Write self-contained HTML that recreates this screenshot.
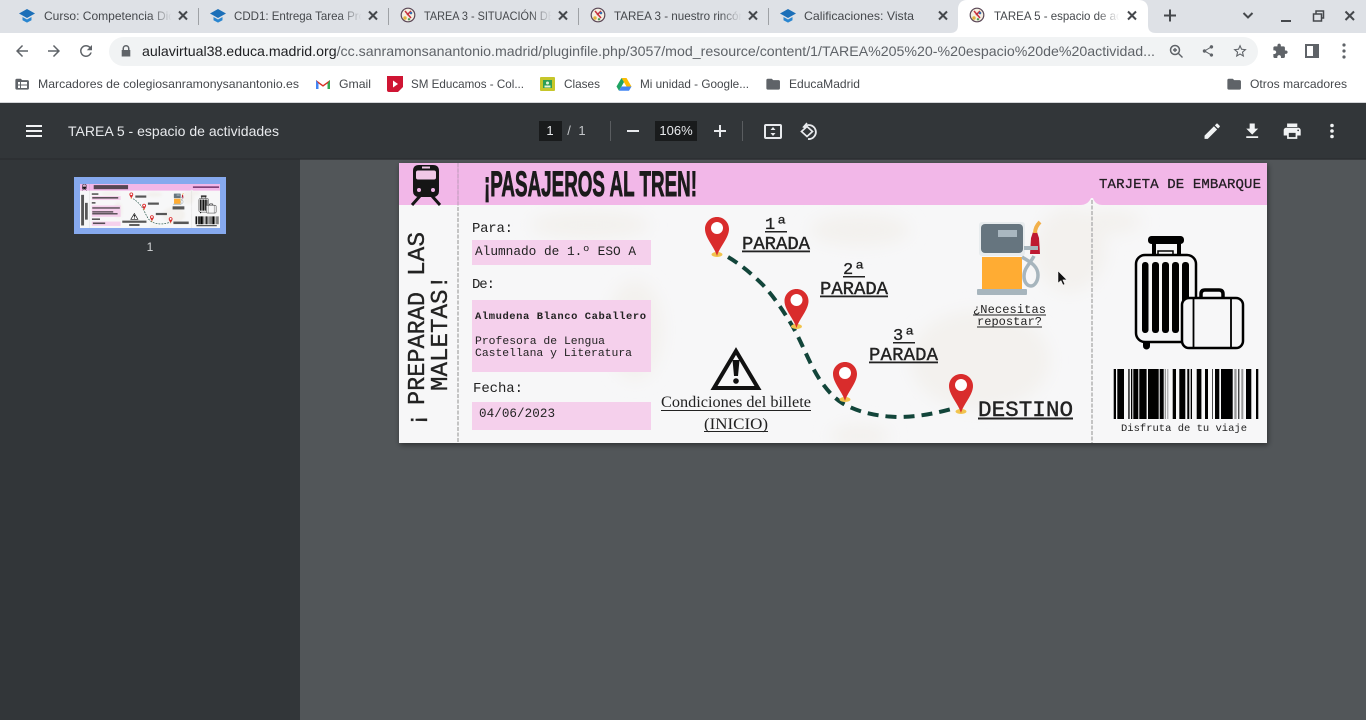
<!DOCTYPE html>
<html lang="es"><head><meta charset="utf-8"><title>TAREA 5 - espacio de actividades</title>
<style>
html,body{margin:0;padding:0;width:1366px;height:720px;overflow:hidden;background:#525659}
svg{display:block;position:absolute;left:0;top:0}
text{font-family:"Liberation Sans",sans-serif}
.t{font-size:12px;fill:#45484c}
.b{font-size:12px;fill:#45484c}
.m{font-family:"Liberation Mono",monospace;fill:#222}
.w{fill:#e8eaed}
.x{stroke:#45484c;stroke-width:2;fill:none}
</style></head><body>
<svg width="1366" height="720" viewBox="0 0 1366 720" xmlns="http://www.w3.org/2000/svg">
<defs>
<linearGradient id="fd"><stop offset="0" stop-color="#dee1e6" stop-opacity="0"/><stop offset=".8" stop-color="#dee1e6"/></linearGradient>
<linearGradient id="fw"><stop offset="0" stop-color="#fff" stop-opacity="0"/><stop offset=".8" stop-color="#fff"/></linearGradient>
<filter id="bl" x="-30%" y="-30%" width="160%" height="160%"><feGaussianBlur stdDeviation="8"/></filter>
<filter id="sh" x="-3%" y="-5%" width="106%" height="112%"><feDropShadow dx="1" dy="2" stdDeviation="3" flood-color="#000" flood-opacity=".45"/></filter>
<clipPath id="tk"><rect x="399" y="163" width="868" height="280"/></clipPath>
<g id="cap"><path d="M-8-1.500 0-6l8 4.500L0 3z" fill="#1c6fb8"/><path d="M-4.500 2 0 4.500 4.500 2v3.200L0 7.600-4.500 5.200z" fill="#2a86d0"/></g>
<g id="ring"><circle r="6.800" fill="#f5efe2" stroke="#5a4756" stroke-width="1.200"/><path d="M-3-4 3 3M3-4-1 0" stroke="#c7303c" stroke-width="1.500" fill="none"/><circle cx="-3" cy="3" r="1.700" fill="#e2b23c"/><circle cx="3" cy="-2" r="1.300" fill="#3a6fb0"/><circle cx="1" cy="4.300" r="1.200" fill="#4d9a5a"/></g>
<path id="pinshape" d="M12 0C5.400 0 0 5.300 0 12c0 9 9.500 18 12 27 2.500-9 12-18 12-27C24 5.300 18.600 0 12 0z" fill="#d92c2c"/>
<g id="pin"><ellipse cx="12" cy="37.500" rx="5.500" ry="2.500" fill="#f1c44e"/><use href="#pinshape"/><circle cx="12" cy="11" r="6" fill="#fff"/></g>

<g id="art">
<rect x="399" y="163" width="868" height="280" fill="#f7f7f8"/>
<g clip-path="url(#tk)"><g fill="#f3f1ee" filter="url(#bl)">
<ellipse cx="590" cy="225" rx="60" ry="14"/><ellipse cx="635" cy="330" rx="28" ry="50"/><ellipse cx="860" cy="230" rx="50" ry="16"/>
<ellipse cx="980" cy="360" rx="70" ry="50"/><ellipse cx="1070" cy="250" rx="36" ry="42"/><ellipse cx="1110" cy="222" rx="32" ry="12"/><ellipse cx="860" cy="436" rx="30" ry="12"/>
</g></g>
<path d="M399 163h868v42h-164q-8 0-10-7h-2q-3 7-11 7H399z" fill="#f2b7e8"/>
<path d="M458 163v280M1092 200v243" stroke="#b3b3b3" stroke-width="1.500" stroke-dasharray="4 1.500"/>
<path d="M458 163v42" stroke="#d99cd0" stroke-width="1"/>
<path d="M419 165h14q6 0 6 6v20q0 5-5 6h-16q-5-1-5-6v-20q0-6 6-6z" fill="#151515"/>
<rect x="416" y="170.500" width="20" height="9" rx="2" fill="#f0c8e6"/><rect x="422" y="166.500" width="8" height="2" fill="#f0c8e6"/>
<circle cx="419" cy="190" r="2" fill="#f2b7e8"/><circle cx="433" cy="190" r="2" fill="#f2b7e8"/>
<path d="M420 196l-8 9M432 196l8 9" stroke="#151515" stroke-width="3"/>
<rect x="472" y="240" width="179" height="25" fill="#f5d0ec"/>
<rect x="472" y="300" width="179" height="72" fill="#f5d0ec"/>
<rect x="472" y="402" width="179" height="28" fill="#f5d0ec"/>
<path d="M736 351l22 37h-44z" fill="none" stroke="#111" stroke-width="4"/>
<path d="M732.500 360h7l-1.500 16h-4z" fill="#111"/><circle cx="736" cy="381" r="2.800" fill="#111"/>
<path d="M728 257C740 264 752 274 763 285c12 13 21 27 30 42 10 18 16 36 27 53 7 10 13 17 22 23 14 8 30 13 55 14 22 0 40-4 58-9" fill="none" stroke="#12453a" stroke-width="4" stroke-dasharray="11 7"/>
<use href="#pin" x="705" y="217"/>
<use href="#pin" x="784.500" y="289"/>
<use href="#pin" x="833" y="362"/>
<use href="#pin" x="949" y="374"/>
<rect x="979" y="222" width="46" height="34" rx="3" fill="#e8ecee"/>
<rect x="981" y="224" width="42" height="29" rx="4" fill="#66757f"/>
<rect x="998" y="230" width="19" height="7" fill="#a9b7c0"/>
<rect x="982" y="257" width="40" height="33" fill="#ffac33"/>
<rect x="977" y="289" width="50" height="6" rx="1" fill="#a7b5bd"/>
<path d="M1022 257c6 4 16 8 16 18 0 7-4 11-7 11-4 0-7-4-7-10 0-8 6-12 10-20" fill="none" stroke="#a7b5bd" stroke-width="3.500"/>
<path d="M1031 238l2-6h4l2 6 1 16h-10z" fill="#be1931"/>
<rect x="1024" y="246" width="14" height="4" fill="#a7b5bd"/>
<path d="M1035 233c0-5 2-8 5-11" fill="none" stroke="#f2b04a" stroke-width="4"/>
<rect x="1148" y="236" width="36" height="8" rx="3.500" fill="#000"/>
<rect x="1152" y="244" width="4" height="11" fill="#000"/><rect x="1177" y="244" width="4" height="11" fill="#000"/>
<path d="M1158 254v-3h15v3" fill="none" stroke="#000" stroke-width="1.500"/>
<rect x="1136" y="255" width="60" height="87" rx="9" fill="#f7f7f8" stroke="#000" stroke-width="2.500"/>
<g fill="#000"><rect x="1142" y="262" width="6.500" height="71" rx="3"/><rect x="1152" y="262" width="7" height="71" rx="3"/><rect x="1162" y="262" width="7" height="71" rx="3"/><rect x="1172" y="262" width="7" height="71" rx="3"/><rect x="1182" y="262" width="7" height="71" rx="3"/>
<path d="M1143 342h7v4a3.500 3.500 0 0 1-7 0z"/></g>
<path d="M1201 298v-4q0-4 4-4h14q4 0 4 4v4" fill="none" stroke="#000" stroke-width="3.500"/>
<rect x="1182" y="298" width="61" height="50" rx="7" fill="#f7f7f8" stroke="#000" stroke-width="2.500"/>
<path d="M1193.500 298v50M1231 298v50" stroke="#000" stroke-width="1.800"/>
<g fill="#000">
<rect x="1113.700" y="369" width="2.300" height="50"/><rect x="1117.300" y="369" width="6.700" height="50"/><rect x="1128.300" y="369" width="1.300" height="50"/><rect x="1131" y="369" width="1.300" height="50"/><rect x="1133.300" y="369" width="5" height="50"/><rect x="1139.300" y="369" width="7.300" height="50"/><rect x="1148" y="369" width="10.700" height="50"/><rect x="1159.700" y="369" width="4" height="50"/><rect x="1172.700" y="369" width="3.300" height="50"/><rect x="1179.300" y="369" width="6" height="50"/><rect x="1187.300" y="369" width="2" height="50"/><rect x="1190.700" y="369" width="1.300" height="50"/><rect x="1196.700" y="369" width="4.700" height="50"/><rect x="1205" y="369" width="3" height="50"/><rect x="1212" y="369" width=".7" height="50"/><rect x="1215" y="369" width="4.300" height="50"/><rect x="1221" y="369" width="11.700" height="50"/><rect x="1238.300" y="369" width="1" height="50"/><rect x="1246" y="369" width="5.300" height="50"/><rect x="1256" y="369" width="2.300" height="50"/>
</g>
<g fill="#999"><rect x="1164.700" y="369" width="1.300" height="50"/><rect x="1167.300" y="369" width="1" height="50"/><rect x="1234.300" y="369" width="2.300" height="50"/><rect x="1241.300" y="369" width="2" height="50"/></g>
</g>
</defs>

<!-- chrome -->
<rect width="1366" height="33" fill="#dee1e6"/>
<rect y="33" width="1366" height="69" fill="#fff"/>
<rect y="102" width="1366" height="1" fill="#d3d5d8"/>
<path d="M950 33c6 0 8-3 8-8V9c0-5 3-9 9-9h172c6 0 9 4 9 9v16c0 5 2 8 8 8z" fill="#fff"/>
<g stroke="#9ea1a5" stroke-width="1"><path d="M198.500 8v17M388.500 8v17M578.500 8v17M768.500 8v17"/></g>

<use href="#cap" x="27" y="15"/>
<text class="t" x="44" y="20" textLength="131" lengthAdjust="spacingAndGlyphs">Curso: Competencia Did</text><rect x="150" y="6" width="27" height="20" fill="url(#fd)"/>
<path class="x" d="M179 11.500l8 8M187 11.500l-8 8"/>
<use href="#cap" x="218" y="15"/>
<text class="t" x="234" y="20" textLength="131" lengthAdjust="spacingAndGlyphs">CDD1: Entrega Tarea Pro</text><rect x="340" y="6" width="27" height="20" fill="url(#fd)"/>
<path class="x" d="M369 11.500l8 8M377 11.500l-8 8"/>
<use href="#ring" x="408" y="15"/>
<text class="t" x="424" y="20" textLength="131" lengthAdjust="spacingAndGlyphs">TAREA 3 - SITUACIÓN DE</text><rect x="530" y="6" width="27" height="20" fill="url(#fd)"/>
<path class="x" d="M559 11.500l8 8M567 11.500l-8 8"/>
<use href="#ring" x="598" y="15"/>
<text class="t" x="614" y="20" textLength="131" lengthAdjust="spacingAndGlyphs">TAREA 3 - nuestro rincón</text><rect x="720" y="6" width="27" height="20" fill="url(#fd)"/>
<path class="x" d="M749 11.500l8 8M757 11.500l-8 8"/>
<use href="#cap" x="788" y="15"/>
<text class="t" x="804" y="20" textLength="110" lengthAdjust="spacingAndGlyphs">Calificaciones: Vista</text>
<path class="x" d="M939 11.500l8 8M947 11.500l-8 8"/>
<use href="#ring" x="977" y="15"/>
<text class="t" x="994" y="20" textLength="131" lengthAdjust="spacingAndGlyphs">TAREA 5 - espacio de act</text><rect x="1097" y="6" width="28" height="20" fill="url(#fw)"/>
<path class="x" d="M1128 11.500l8 8M1136 11.500l-8 8"/>
<path d="M1170 9.500v12M1164 15.500h12" stroke="#45484c" stroke-width="2" fill="none"/>
<path d="M1243.500 13l4.500 4.500 4.500-4.500" stroke="#45484c" stroke-width="2" fill="none"/>
<path d="M1281 21h10" stroke="#45484c" stroke-width="2"/>
<path d="M1313.500 14h8v7h-8zM1316 14v-3h7.500v7H1322" stroke="#45484c" stroke-width="1.500" fill="none"/>
<path class="x" d="M1345.500 11.500l8.500 8.500M1354 11.500l-8.500 8.500"/>

<!-- nav row -->
<g fill="#5f6368">
<path transform="translate(13 42) scale(.75)" d="M20 11H7.830l5.590-5.590L12 4l-8 8 8 8 1.410-1.410L7.830 13H20v-2z"/>
<path transform="translate(63 42) scale(-.75 .75)" d="M20 11H7.830l5.590-5.590L12 4l-8 8 8 8 1.410-1.410L7.830 13H20v-2z"/>
<path transform="translate(77 42) scale(.75)" d="M17.650 6.350A7.950 7.950 0 0 0 12 4a8 8 0 1 0 7.750 10h-2.080A6 6 0 1 1 12 6c1.660 0 3.140.690 4.220 1.780L13 11h7V4l-2.350 2.350z"/>
</g>
<rect x="109" y="37" width="1149" height="29" rx="14.500" fill="#f1f3f4"/>
<path d="M122.500 50v-1.500a3.500 3.500 0 0 1 7 0V50h.800v6.500h-8.600V50zm1.500 0h4v-1.500a2 2 0 0 0-4 0z" fill="#5f6368"/>
<text x="142" y="56" font-size="14" textLength="1013" lengthAdjust="spacingAndGlyphs"><tspan fill="#202124">aulavirtual38.educa.madrid.org</tspan><tspan fill="#5f6368">/cc.sanramonsanantonio.madrid/pluginfile.php/3057/mod_resource/content/1/TAREA%205%20-%20espacio%20de%20actividad...</tspan></text>
<circle cx="1175" cy="50" r="4.500" fill="none" stroke="#5f6368" stroke-width="1.500"/><path d="M1178.500 53.500l4 4M1173 50h4M1175 48v4" stroke="#5f6368" stroke-width="1.400"/>
<path transform="translate(1201 44) scale(.58)" fill="#5f6368" d="M18 16.080c-.760 0-1.440.300-1.960.770L8.910 12.700c.050-.230.090-.460.090-.700s-.040-.470-.090-.700l7.050-4.110c.540.500 1.250.810 2.040.810 1.660 0 3-1.340 3-3s-1.340-3-3-3-3 1.340-3 3c0 .240.040.470.090.700L8.040 9.810C7.500 9.310 6.790 9 6 9c-1.660 0-3 1.340-3 3s1.340 3 3 3c.790 0 1.500-.310 2.040-.810l7.120 4.160c-.050.210-.080.430-.080.650 0 1.610 1.310 2.920 2.920 2.920s2.920-1.310 2.920-2.920-1.310-2.920-2.920-2.920z"/>
<path transform="translate(1232 43) scale(.67)" fill="#5f6368" d="M22 9.240l-7.190-.620L12 2 9.190 8.630 2 9.240l5.460 4.730L5.820 21 12 17.270 18.180 21l-1.630-7.030L22 9.240zM12 15.400l-3.760 2.270 1-4.280-3.320-2.880 4.380-.380L12 6.100l1.710 4.040 4.380.380-3.320 2.880 1 4.280L12 15.400z"/>
<path transform="translate(1272 43) scale(.68)" fill="#5f6368" d="M20.500 11H19V7c0-1.100-.900-2-2-2h-4V3.500C13 2.120 11.880 1 10.500 1S8 2.120 8 3.500V5H4c-1.100 0-1.990.900-1.990 2v3.800H3.500c1.490 0 2.700 1.210 2.700 2.700s-1.210 2.700-2.700 2.700H2V20c0 1.100.900 2 2 2h3.800v-1.500c0-1.490 1.210-2.700 2.700-2.700 1.490 0 2.700 1.210 2.700 2.700V22H17c1.100 0 2-.900 2-2v-4h1.500c1.380 0 2.500-1.120 2.500-2.500S21.880 11 20.500 11z"/>
<rect x="1306" y="45" width="12" height="12" fill="none" stroke="#5f6368" stroke-width="2"/><rect x="1313" y="45" width="5" height="12" fill="#5f6368"/>
<g fill="#5f6368"><circle cx="1344" cy="45" r="1.600"/><circle cx="1344" cy="51" r="1.600"/><circle cx="1344" cy="57" r="1.600"/></g>

<!-- bookmarks -->
<g fill="#5f6368">
<path transform="translate(14 76) scale(.68)" d="M10 4H4c-1.100 0-1.990.900-1.990 2L2 18c0 1.100.900 2 2 2h16c1.100 0 2-.900 2-2V8c0-1.100-.900-2-2-2h-8l-2-2z"/>
<path transform="translate(765 76) scale(.68)" d="M10 4H4c-1.100 0-1.990.900-1.990 2L2 18c0 1.100.900 2 2 2h16c1.100 0 2-.900 2-2V8c0-1.100-.900-2-2-2h-8l-2-2z"/>
<path transform="translate(1226 76) scale(.68)" d="M10 4H4c-1.100 0-1.990.900-1.990 2L2 18c0 1.100.900 2 2 2h16c1.100 0 2-.900 2-2V8c0-1.100-.900-2-2-2h-8l-2-2z"/>
</g>
<rect x="18" y="82" width="9" height="6" fill="#fff"/><path d="M20.500 82v6M18 85h9" stroke="#5f6368"/>
<text class="b" x="38" y="88" textLength="261" lengthAdjust="spacingAndGlyphs">Marcadores de colegiosanramonysanantonio.es</text>
<path d="M316 89v-9l7 5 7-5v9h-2.500v-5.500l-4.500 3.300-4.500-3.300V89z" fill="#d93025"/><path d="M316 80l0 9h2.500v-5.500z" fill="#4285f4"/><path d="M330 80v9h-2.500v-5.500z" fill="#34a853"/>
<text class="b" x="339" y="88" textLength="32" lengthAdjust="spacingAndGlyphs">Gmail</text>
<path d="M387 76h16v11l-5 5h-9a2 2 0 0 1-2-2z" fill="#cf1533"/><path d="M393 80.500l5 3.500-5 3.500z" fill="#fff"/>
<text class="b" x="411" y="88" textLength="113" lengthAdjust="spacingAndGlyphs">SM Educamos - Col...</text>
<rect x="540" y="77" width="15" height="14" rx="1" fill="#c6c62a"/><rect x="543" y="80" width="9" height="8" fill="#2e9e55"/><circle cx="547.500" cy="83" r="1.500" fill="#e8f3d8"/><rect x="544.500" y="85.500" width="6" height="2" fill="#e8f3d8"/>
<text class="b" x="564" y="88" textLength="36" lengthAdjust="spacingAndGlyphs">Clases</text>
<path d="M621.500 78h5l5 8.500h-5z" fill="#fbbc04"/><path d="M621.500 78l-5 8.500 2.500 4.200 5-8.600z" fill="#1fa463"/><path d="M619 90.700h10l2.500-4.200h-10z" fill="#4285f4"/>
<text class="b" x="640" y="88" textLength="109" lengthAdjust="spacingAndGlyphs">Mi unidad - Google...</text>
<text class="b" x="789" y="88" textLength="71" lengthAdjust="spacingAndGlyphs">EducaMadrid</text>
<text class="b" x="1250" y="88" textLength="97" lengthAdjust="spacingAndGlyphs">Otros marcadores</text>

<!-- pdf viewer -->
<rect y="103" width="1366" height="617" fill="#525659"/>
<rect y="159" width="300" height="561" fill="#323639"/>
<rect y="103" width="1366" height="56" fill="#323639"/>
<rect y="158" width="1366" height="2" fill="#2b2e30" opacity=".7"/>
<path d="M26 125h16v2H26zM26 130h16v2H26zM26 135h16v2H26z" fill="#f1f3f4"/>
<text x="68" y="136" font-size="14" class="w" textLength="211" lengthAdjust="spacingAndGlyphs">TAREA 5 - espacio de actividades</text>
<rect x="539" y="121" width="23" height="20" fill="#191b1c"/>
<text x="550" y="135" font-size="13" text-anchor="middle" class="w">1</text>
<text x="569" y="135" font-size="13" text-anchor="middle" fill="#c4c7ca">/</text>
<text x="582" y="135" font-size="13" text-anchor="middle" fill="#c4c7ca">1</text>
<rect x="610" y="121" width="1" height="20" fill="#5a5d60"/>
<rect x="627" y="130" width="12" height="2" fill="#e8eaed"/>
<rect x="655" y="121" width="42" height="20" fill="#191b1c"/>
<text x="676" y="135" font-size="13" text-anchor="middle" class="w">106%</text>
<path d="M714 131h12M720 125v12" stroke="#e8eaed" stroke-width="2"/>
<rect x="742" y="121" width="1" height="20" fill="#5a5d60"/>
<rect x="765" y="125" width="16" height="13" rx="1" fill="none" stroke="#e8eaed" stroke-width="2"/><path d="M773 127l-2.500 3h5zM773 136l-2.500-3h5z" fill="#e8eaed"/>
<path d="M804 127a7 7 0 1 1 4 12" fill="none" stroke="#e8eaed" stroke-width="1.800"/><path d="M807 123l-3.500 4 4.500 2" fill="none" stroke="#e8eaed" stroke-width="1.500"/><path d="M807 126.500l-5.500 5 5.500 5 5.500-5z" fill="#323639" stroke="#e8eaed" stroke-width="1.700"/>
<g fill="#f1f3f4">
<path transform="translate(1202 121) scale(.85)" d="M3 17.250V21h3.750L17.810 9.940l-3.750-3.750L3 17.250zM20.710 7.040c.390-.390.390-1.020 0-1.410l-2.340-2.340c-.390-.390-1.020-.390-1.410 0l-1.830 1.830 3.750 3.750 1.830-1.830z"/>
<path transform="translate(1242 121) scale(.85)" d="M19 9h-4V3H9v6H5l7 7 7-7zM5 18v2h14v-2H5z"/>
<path transform="translate(1282 121) scale(.85)" d="M19 8H5c-1.660 0-3 1.340-3 3v6h4v4h12v-4h4v-6c0-1.660-1.340-3-3-3zm-3 11H8v-5h8v5zm3-7c-.550 0-1-.450-1-1s.450-1 1-1 1 .450 1 1-.450 1-1 1zm-1-9H6v4h12V3z"/>
<circle cx="1332" cy="125.500" r="1.800"/><circle cx="1332" cy="131" r="1.800"/><circle cx="1332" cy="136.500" r="1.800"/>
</g>

<!-- thumbnail -->
<rect x="74" y="177" width="152" height="57" fill="#86a9ee"/>
<g transform="translate(80 184) scale(.1613 .1571) translate(-399 -163)">
<use href="#art"/>
<g fill="#222" opacity=".75">
<rect x="484" y="170" width="213" height="26"/>
<rect x="406" y="232" width="18" height="195"/><rect x="430" y="283" width="17" height="107"/>
<rect x="472" y="222" width="41" height="10"/><rect x="475" y="246" width="161" height="10"/>
<rect x="472" y="278" width="23" height="10"/><rect x="475" y="311" width="171" height="9"/><rect x="475" y="336" width="130" height="9"/><rect x="475" y="348" width="157" height="9"/>
<rect x="473" y="382" width="50" height="10"/><rect x="479" y="408" width="76" height="10"/>
<rect x="742" y="236" width="68" height="14"/><rect x="820" y="281" width="68" height="14"/><rect x="869" y="347" width="69" height="14"/><rect x="978" y="402" width="95" height="16"/>
<rect x="661" y="396" width="150" height="14"/><rect x="704" y="418" width="64" height="12"/><rect x="973" y="305" width="73" height="20"/><rect x="1121" y="424" width="126" height="8"/>
</g>
<rect x="1099" y="178" width="162" height="10" fill="#7a3a72"/>
</g>
<text x="150" y="251" font-size="12" text-anchor="middle" fill="#d4d6d8">1</text>

<!-- ticket -->
<g filter="url(#sh)"><rect x="399" y="163" width="868" height="280" fill="#f7f7f8"/></g>
<use href="#art"/>
<text x="484" y="196" font-size="35" font-weight="700" fill="#1b1b1b" stroke="#1b1b1b" stroke-width=".9" textLength="213" lengthAdjust="spacingAndGlyphs">¡PASAJEROS AL TREN!</text>
<text x="1099" y="188" font-size="14" class="m" stroke="#2a1a2a" stroke-width=".3" textLength="162" lengthAdjust="spacing">TARJETA DE EMBARQUE</text>

<text class="m" transform="translate(424 427) rotate(-90)" font-size="24" stroke="#222" stroke-width=".35">¡</text>
<text class="m" transform="translate(424 405) rotate(-90)" font-size="24" stroke="#222" stroke-width=".35" textLength="113" lengthAdjust="spacingAndGlyphs">PREPARAD</text>
<text class="m" transform="translate(424 276) rotate(-90)" font-size="24" stroke="#222" stroke-width=".35" textLength="44" lengthAdjust="spacingAndGlyphs">LAS</text>
<text class="m" transform="translate(447 391) rotate(-90)" font-size="24" stroke="#222" stroke-width=".35" textLength="116" lengthAdjust="spacingAndGlyphs">MALETAS!</text>

<text class="m" x="472" y="232" font-size="14" textLength="41">Para:</text>
<text class="m" x="475" y="255" font-size="12.800" textLength="161">Alumnado de 1.º ESO A</text>
<text class="m" x="472" y="288" font-size="14" textLength="23">De:</text>
<text class="m" x="475" y="319" font-size="10.500" font-weight="700" fill="#111" textLength="171">Almudena Blanco Caballero</text>
<text class="m" x="475" y="344" font-size="11.400" textLength="130">Profesora de Lengua</text>
<text class="m" x="475" y="356" font-size="11.400" textLength="157">Castellana y Literatura</text>
<text class="m" x="473" y="392" font-size="14" textLength="50">Fecha:</text>
<text class="m" x="479" y="417" font-size="12.600" textLength="76">04/06/2023</text>

<text x="661" y="407" font-size="16" fill="#222" style="font-family:'Liberation Serif',serif" textLength="150" lengthAdjust="spacingAndGlyphs">Condiciones del billete</text>
<rect x="661" y="410" width="150" height="1" fill="#222"/>
<text x="704" y="429" font-size="16" fill="#222" style="font-family:'Liberation Serif',serif" textLength="64" lengthAdjust="spacingAndGlyphs">(INICIO)</text>
<rect x="704" y="431" width="64" height="1" fill="#222"/>

<text class="m" x="765" y="229" textLength="22" font-size="17" stroke="#222" stroke-width=".3">1ª</text><rect x="765" y="231" width="22" height="1.500" fill="#222"/>
<text class="m" x="742" y="249" textLength="68" stroke="#222" stroke-width=".4" font-size="18.900">PARADA</text><rect x="742" y="250.500" width="68" height="1.800" fill="#222"/>
<text class="m" x="843" y="274" textLength="22" font-size="17" stroke="#222" stroke-width=".3">2ª</text><rect x="843" y="276" width="22" height="1.500" fill="#222"/>
<text class="m" x="820" y="294" textLength="68" stroke="#222" stroke-width=".4" font-size="18.900">PARADA</text><rect x="820" y="295.500" width="68" height="1.800" fill="#222"/>
<text class="m" x="893" y="340" textLength="22" font-size="17" stroke="#222" stroke-width=".3">3ª</text><rect x="893" y="342" width="22" height="1.500" fill="#222"/>
<text class="m" x="869" y="360" textLength="69" stroke="#222" stroke-width=".4" font-size="18.900">PARADA</text><rect x="869" y="361.500" width="69" height="1.800" fill="#222"/>
<text class="m" x="978" y="416" font-size="22.600" stroke="#222" stroke-width=".4" textLength="95">DESTINO</text><rect x="978" y="417.500" width="95" height="2" fill="#222"/>

<text class="m" x="973" y="313" font-size="12" fill="#222" textLength="73">¿Necesitas</text><rect x="973" y="314.500" width="73" height="1" fill="#222"/>
<text class="m" x="977" y="325" font-size="12" fill="#222" textLength="65">repostar?</text><rect x="977" y="326.500" width="65" height="1" fill="#222"/>

<path d="M1058 271v12l3-2.500 2 4.500 1.800-.800-2-4.300h4z" fill="#111" stroke="#fff" stroke-width=".5"/>
<text class="m" x="1121" y="431" font-size="10.500" textLength="126">Disfruta de tu viaje</text>
</svg>
</body></html>
